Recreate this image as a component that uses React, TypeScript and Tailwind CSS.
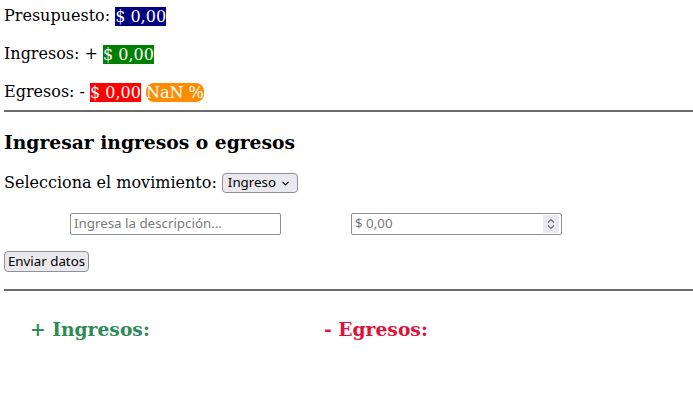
import { ChevronDown } from "lucide-react";

const serif = "font-['DejaVu_Serif','Liberation_Serif',serif]";
const ctl = "font-['Noto_Sans','Open_Sans',sans-serif] text-[13.33px]";

export default function App() {
  return (
    <div className={`${serif} text-[16px] text-black bg-white w-[693px] h-[410px] pl-[4px] pt-[5px]`}>
      {/* resumen */}
      <div className="flex flex-col gap-4">
        <p className="h-[22px] leading-[22px] flex items-center whitespace-pre">
          Presupuesto: <span className="bg-[#000080] text-white leading-[19px]">$ 0,00</span>
        </p>
        <p className="h-[22px] leading-[22px] flex items-center whitespace-pre">
          Ingresos: + <span className="bg-[#008000] text-white leading-[19px]">$ 0,00</span>
        </p>
        <p className="h-[22px] leading-[22px] flex items-center whitespace-pre">
          Egresos: - <span className="bg-[#ff0000] text-white leading-[19px]">$ 0,00</span>
          <span className="ml-[5px] bg-[#ff8c00] text-white rounded-lg leading-[19px]">NaN %</span>
        </p>
      </div>

      <hr className="mt-[7px] border-0 border-t-2 border-[#6b6b6b]" />

      {/* formulario */}
      <h2 className="mt-[19px] h-[22px] leading-[22px] text-[18.72px] font-bold">Ingresar ingresos o egresos</h2>
      <div className="mt-[19px] h-[22px] flex items-center">
        <span>Selecciona el movimiento:&nbsp;</span>
        <div className={`${ctl} w-[76px] h-[20px] border border-[#8f8f9d] rounded-[4px] bg-[#e9e9ed] flex items-center justify-between pl-[5px] pr-[6px]`}>
          <span>Ingreso</span>
          <ChevronDown size={11} strokeWidth={2.5} />
        </div>
      </div>

      <div className="mt-[19px] flex items-center">
        <div className={`${ctl} ml-[66px] w-[211px] h-[22px] border border-[#8f8f9d] rounded-[2px] flex items-center pl-[3px] text-[#7a7a7a]`}>
          Ingresa la descripción...
        </div>
        <div className={`${ctl} ml-[70px] w-[211px] h-[22px] border border-[#8f8f9d] rounded-[2px] flex items-center justify-between pl-[3px] pr-[2px] text-[#7a7a7a]`}>
          <span>$ 0,00</span>
          <span className="w-[16px] h-[18px] bg-[#e9e9ed] flex flex-col items-center justify-center text-[#6f6f6f]">
            <svg width="8" height="12" viewBox="0 0 8 12" fill="none" stroke="currentColor" strokeWidth="1.2">
              <path d="M1 4.5 L4 1.5 L7 4.5" />
              <path d="M1 7.5 L4 10.5 L7 7.5" />
            </svg>
          </span>
        </div>
      </div>

      <button className={`${ctl} mt-[16px] w-[85px] h-[21px] border border-[#8f8f9d] rounded-[4px] bg-[#e9e9ed] flex items-center justify-center`}>
        Enviar datos
      </button>

      <hr className="mt-[17px] border-0 border-t-2 border-[#6b6b6b]" />

      {/* listados */}
      <div className="mt-[27px] flex text-[18.72px] font-bold h-[22px] leading-[22px]">
        <h3 className="ml-[26px] w-[294px] text-[#2e8b57]">+ Ingresos:</h3>
        <h3 className="text-[#dc143c]">- Egresos:</h3>
      </div>
    </div>
  );
}
